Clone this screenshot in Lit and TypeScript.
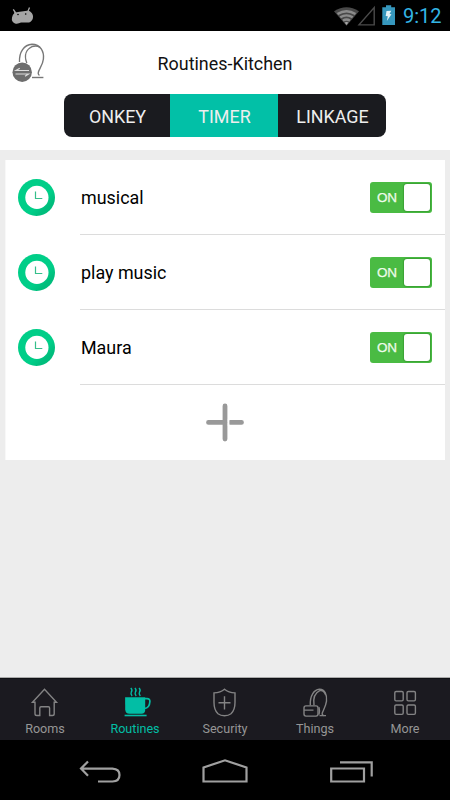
import { LitElement, html, css, svg } from "lit";
import { customElement, property } from "lit/decorators.js";

const tabIcons: Record<string, unknown> = {
  Rooms: svg`<path d="M4.5 18.7 L16.5 5.7 L28.5 18.7 H26.2 V30.2 Q26.2 32 24.4 32 H21.6 V24.4 Q21.6 23.2 20.4 23.2 H13 Q11.8 23.2 11.8 24.4 V32 H8.8 Q7 32 7 30.2 V18.7 Z"/>`,
  Routines: svg`<path fill="currentColor" stroke="none" d="M7.1 13.8 H27.2 V26.5 Q27.2 30.2 23.5 30.2 H11.5 Q7.4 30.2 7.2 26 Z"/><path d="M27 15.1 H29 Q32 15.1 31.9 18 Q31.5 24.5 26.5 25" stroke-width="1.7"/><path d="M6.6 32 H28.6" stroke-width="1.6"/><path d="M12.8 4.5 q2 2 .5 4 q-1 2 .8 4 M16.9 4.5 q2 2 .5 4 q-1 2 .8 4 M21 4.5 q2 2 .5 4 q-1 2 .8 4" stroke-width="1.4"/>`,
  Security: svg`<path d="M16.5 5.7 Q20.5 9 27 9.4 V18.9 Q27 26.4 23 30.2 Q20.5 32.2 16.5 32.2 Q12.5 32.2 10 30.2 Q6 26.4 6 18.9 V9.4 Q12.5 9 16.5 5.7 Z M16.5 12.7 V25.9 M10.5 19.2 H22.5"/>`,
  Things: svg`<path d="M12.3 21.7 C11.8 12.2 16 6.2 21.3 5.8 C27 5.5 29.2 11.7 28.5 17.7 C27.9 22.7 24.9 27.2 24.2 29.8 Q24 32 26.2 32.1 M16 21.7 C15 14.7 17 9.2 21.8 7.1 Q25.7 6.1 27.6 11.2"/><rect x="6" y="22.4" width="14" height="10.2" rx="2"/><path d="M6 26.6 H15.5 M21 23.7 Q22 27.2 21 31.2 M21.5 32.1 H28"/>`,
  More: svg`<rect x="6.8" y="8" width="8.4" height="9.4" rx="1.3"/><rect x="19" y="8" width="8.4" height="9.4" rx="1.3"/><rect x="6.8" y="21.5" width="8.4" height="9.4" rx="1.3"/><rect x="19" y="21.5" width="8.4" height="9.4" rx="1.3"/>`,
};

@customElement("status-bar")
class StatusBar extends LitElement {
  static styles = css`
    :host { display: flex; height: 31px; flex: none; background: #000; align-items: center; padding: 0 7px 0 11px; }
    svg { display: block; flex: none; }
    .space { flex: 1; }
    .battery { margin-left: 6px; }
    .time { margin-left: 7px; font-size: 20px; line-height: 31px; padding-top: 2px; color: #33b5e5; width: 40px; white-space: nowrap; }
  `;
  render() {
    return html`
      <svg width="24" height="31" viewBox="11 0 24 31">
        <path fill="#a5a5a5" d="M14.4 13 L14 10 L16 12.3 Q17 12 18 11.9 L27 10.8 Q29 10.3 30.5 11.8 Q34 14.5 32.7 19 Q31 22.8 27 22.6 H21 Q18 24.2 15 23.5 Q11.2 22 12 17.5 Q12.5 14.5 14.4 13 Z"/>
        <path stroke="#a5a5a5" stroke-width="1.3" d="M15.5 13 L13.3 9.3 M27.7 12 L29.5 7.5"/>
        <circle cx="18" cy="14.5" r=".8"/><circle cx="25.7" cy="14" r=".8"/>
      </svg>
      <div class="space"></div>
      <svg width="42" height="31" viewBox="334 0 42 31">
        <path fill="#494949" d="M334 11.2 Q346.5 3.5 359 11.2 L346.5 25.8 Z"/>
        <path fill="none" stroke="#8c8c8c" stroke-width="2.4" d="M337.5 14 Q346.5 8.5 355.5 14 M340.3 17.3 Q346.5 13.5 352.7 17.3 M343 20.5 Q346.5 18.5 350 20.5"/>
        <path fill="#aaa" d="M344.6 22.5 Q346.5 21.5 348.4 22.5 L346.5 25 Z"/>
        <path fill="none" stroke="#4b4b4b" stroke-width="1.4" d="M359 24.9 H374.2 V7.6 Z"/>
      </svg>
      <svg class="battery" width="14" height="31" viewBox="382 0 14 31">
        <path fill="#3697bd" d="M386 5.2 H391.2 V7.2 H395 V25 H382.3 V7.2 H386 Z"/>
        <path fill="#e4f3f8" d="M386.5 11 L391.3 10.8 L389.5 14 L391.5 14.3 L386.8 21 L387.8 16.3 L385.7 16 Z"/>
      </svg>
      <span class="time">9:12</span>`;
  }
}

@customElement("routine-row")
class RoutineRow extends LitElement {
  @property() name = "";
  static styles = css`
    :host { display: flex; height: 75px; align-items: center; padding-left: 13px; color: #000; }
    svg { display: block; flex: none; margin-right: 25px; }
    .body { flex: 1; display: flex; align-items: center; justify-content: space-between; box-sizing: border-box; height: 75px; border-bottom: 1px solid #dcdcdc; padding-right: 13px; }
    .name { font-size: 17.9px; line-height: 24px; padding: 2px 0 0 1px; }
    .toggle { width: 62px; height: 31px; box-sizing: border-box; background: #4abb43; border-radius: 3px; display: flex; align-items: center; justify-content: space-between; padding: 0 2px 0 7px; }
    .on { font: 13.5px/31px "Liberation Sans", sans-serif; color: #eefbea; -webkit-text-stroke: .25px #eefbea; letter-spacing: -.3px; padding-top: 1px; }
    .knob { width: 26px; height: 27px; border-radius: 3px; background: #fff; box-shadow: 0 0 1px 1px #3ba235; }
  `;
  render() {
    return html`
      <svg width="37" height="75" viewBox="18 160 37 75">
        <defs><linearGradient id="g" x1="0" y1="0" x2="1" y2="1"><stop offset=".62" stop-color="#00ce88"/><stop offset=".78" stop-color="#00bd7c"/></linearGradient></defs>
        <circle cx="36.5" cy="197.5" r="18.5" fill="url(#g)"/>
        <circle cx="36.9" cy="197.4" r="11.6" fill="#fff"/>
        <path d="M35.5 191.5 V198.5 H42.3" fill="none" stroke="#36bf8b" stroke-width="1.2"/>
      </svg>
      <div class="body">
        <span class="name">${this.name}</span>
        <div class="toggle"><span class="on">ON</span><span class="knob"></span></div>
      </div>`;
  }
}

@customElement("app-root")
class AppRoot extends LitElement {
  static styles = css`
    :host { display: flex; flex-direction: column; width: 450px; height: 800px; overflow: hidden; background: #ededed; font-family: Roboto, sans-serif; }
    svg { display: block; fill: none; }
    .header { flex: none; height: 119px; background: #fff; display: flex; flex-direction: column; align-items: center; }
    .titlebar { width: 450px; height: 63px; display: grid; grid-template-columns: 60px 1fr 60px; }
    .title { text-align: center; font-size: 17.9px; line-height: 65px; color: #111; }
    .segments { width: 322px; height: 43px; display: grid; grid-template-columns: 106px 108px 108px; border-radius: 8px; overflow: hidden; background: #1a1b1f; }
    .segment { text-align: center; font-size: 17.9px; line-height: 45px; color: #eee; padding-left: 1px; }
    .active { background: #02c0a7; }
    .card { margin: 10px 5px 0; height: 300px; background: #fff; flex: none; border-left: 1px solid #f8f8f8; box-sizing: border-box; }
    .card routine-row { margin-left: -1px; }
    .add { height: 75px; display: flex; justify-content: center; }
    .add svg { margin-left: -1px; }
    .fill { flex: 1; }
    .tabs { flex: none; height: 62px; display: grid; grid-template-columns: repeat(5, 1fr); background: #1b1a20; box-shadow: 0 -1px 0 #aaa; border-top: 1px solid #101014; box-sizing: border-box; }
    .tab { display: flex; flex-direction: column; align-items: center; color: #969696; font-size: 12.6px; line-height: 18px; padding-top: 6px; }
    .tab svg { stroke: currentColor; stroke-width: 1.4; opacity: .85; }
    .tab.on { color: #02bea5; }
    .tab.on svg { opacity: 1; }
    .nav { flex: none; height: 60px; background: #000; }
  `;
  render() {
    return html`
      <status-bar></status-bar>
      <div class="header">
        <div class="titlebar">
          <svg width="60" height="63" viewBox="0 31 60 63">
            <g stroke="#777" stroke-width="1.4">
              <path d="M19.5 62 C19 52 24 44.7 32 44.2 C40.5 44.2 44.3 52 43.4 59 C42.8 66 38 70 38.2 73.2 Q38.3 75 39.5 75.3"/>
              <path d="M26.8 63 C23.5 54.5 27 49 32 46.6 Q37 45 40 47.5"/>
              <path d="M32 77.5 H43.4"/>
            </g>
            <circle cx="22.2" cy="72.2" r="9.7" fill="#6d6d6d"/>
            <path d="M29 70.5 H16 L19.8 68.3 M15.5 74 H28.5 L25 76.3" stroke="#ddd" stroke-width="1.2"/>
          </svg>
          <div class="title">Routines-Kitchen</div>
        </div>
        <div class="segments">
          <div class="segment">ONKEY</div>
          <div class="segment active">TIMER</div>
          <div class="segment">LINKAGE</div>
        </div>
      </div>
      <div class="card">
        ${["musical", "play music", "Maura"].map((n) => html`<routine-row name=${n}></routine-row>`)}
        <div class="add">
          <svg width="40" height="75" viewBox="205 385 40 75">
            <path d="M225 406 V439 M208.5 422.4 H225 M230.2 422.4 H241.5" stroke="#999" stroke-width="4.8" stroke-linecap="round"/>
            <path d="M228.6 419 V426" stroke="#fff" stroke-width="1.6"/>
          </svg>
        </div>
      </div>
      <div class="fill"></div>
      <div class="tabs">
        ${Object.keys(tabIcons).map((n) => html`
          <div class="tab ${n === "Routines" ? "on" : ""}">
            <svg width="34" height="35" viewBox="0 1.5 34 35">${tabIcons[n]}</svg>
            <span>${n}</span>
          </div>`)}
      </div>
      <div class="nav">
        <svg width="450" height="60" viewBox="0 740 450 60" stroke="#a0a0a0" stroke-width="2.2">
          <path d="M88 761.5 L81 768.6 L88 775.8 M81 768.6 H112.5 Q119.5 769 119.5 775 Q119.5 781.3 112.5 781.5 H98"/>
          <path d="M203.5 781.5 V767.5 L225 760.3 L246.5 767.5 V781.5 Z"/>
          <path d="M331.2 768.5 H364 V781.5 H331.2 Z M340 762.4 H371.7 V776.5"/>
        </svg>
      </div>`;
  }
}
